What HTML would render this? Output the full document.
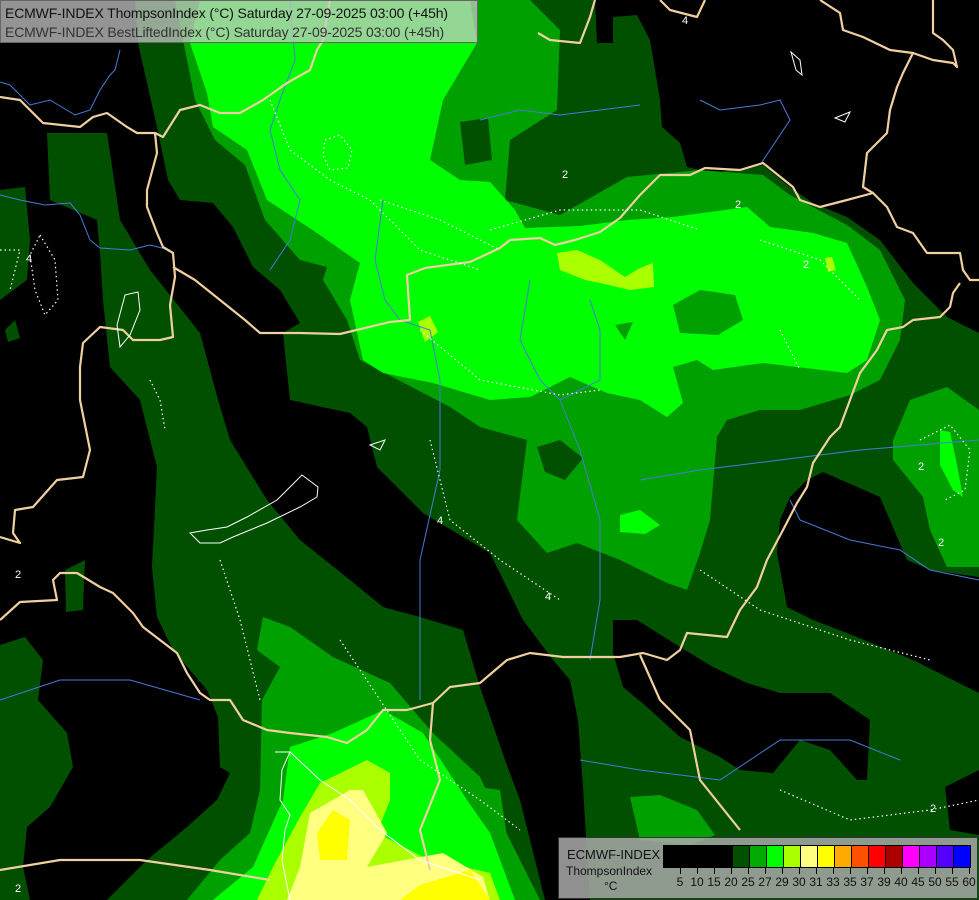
<!DOCTYPE html>
<html><head><meta charset="utf-8"><style>
html,body{margin:0;padding:0;background:#000;}
#w{position:relative;width:979px;height:900px;overflow:hidden;font-family:"Liberation Sans",sans-serif;}
svg{position:absolute;left:0;top:0;}
.hdr{position:absolute;left:0;top:0;width:478px;height:43px;background:rgba(200,200,200,0.74);border:1px solid #666;box-sizing:border-box;}
.hdr div{position:absolute;left:4px;font-size:14px;color:#111;white-space:nowrap;letter-spacing:-0.15px}
.leg{position:absolute;left:558px;top:837px;width:420px;height:62px;background:rgba(168,168,168,0.86);border:1px solid #333;box-sizing:border-box;}
.leg .t{position:absolute;font-size:12px;color:#111;white-space:nowrap}
.bx{position:absolute;top:7px;height:23px;border:1px solid #000;box-sizing:border-box}
.tk{position:absolute;top:29px;width:1px;height:7px;background:#000}
.nm{position:absolute;top:37px;font-size:12px;color:#111;width:24px;text-align:center}
</style></head><body><div id="w">
<svg width="979" height="900" viewBox="0 0 979 900">
<rect width="979" height="900" fill="#005000"/>
<g fill="#000">
<path d="M0,0 L135,0 L138,43 L157,127 L168,180 L180,200 L213,203 L233,227 L253,267 L280,290 L300,323 L283,333 L290,400 L350,413 L367,427 L377,467 L423,513 L490,553 L523,620 L553,660 L570,680 L578,720 L583,787 L590,900 L545,900 L520,800 L505,760 L480,687 L463,630 L420,617 L383,607 L350,580 L300,540 L267,500 L230,440 L218,400 L200,333 L150,270 L120,220 L107,133 L47,133 L50,200 L97,220 L100,253 L103,300 L110,367 L140,400 L157,467 L152,567 L157,617 L173,650 L207,690 L218,717 L220,767 L230,773 L217,800 L187,827 L147,860 L107,900 L30,900 L23,867 L27,827 L50,807 L73,767 L67,733 L38,700 L43,660 L25,637 L0,645 Z"/>
<path d="M595,0 L979,0 L979,333 L947,317 L913,283 L880,240 L847,217 L813,203 L790,187 L763,165 L713,173 L687,167 L680,143 L662,127 L660,100 L650,40 L637,15 L613,17 L613,43 L597,43 Z"/>
<path d="M790,497 L807,480 L823,472 L880,497 L907,560 L930,570 L979,577 L979,693 L953,680 L913,660 L847,633 L813,620 L787,607 L777,553 L780,520 Z"/>
<path d="M613,620 L637,620 L680,647 L713,667 L747,683 L780,693 L830,693 L870,720 L867,780 L857,780 L830,750 L800,740 L773,773 L740,770 L720,757 L680,737 L647,707 L623,687 L613,653 Z"/>
<path d="M945,787 L979,770 L979,835 L950,830Z"/>
</g>
<g fill="#005000">
<path d="M0,190 L25,187 L30,240 L27,280 L0,300Z"/>
<path d="M65,570 L85,560 L83,610 L66,612Z"/>
<path d="M5,330 L15,320 L20,338 L8,342Z"/>
</g>
<g fill="#00a000">
<path d="M175,0 L530,0 L560,30 L557,110 L510,140 L505,200 L560,215 L627,177 L700,170 L763,175 L790,195 L847,225 L880,250 L905,300 L900,340 L880,380 L850,395 L800,410 L760,410 L727,420 L717,437 L710,520 L700,553 L687,590 L667,583 L620,560 L577,543 L547,553 L517,520 L527,440 L480,427 L450,407 L360,360 L347,320 L323,280 L327,267 L300,260 L265,220 L245,165 L215,140 L195,100 Z"/>
<path d="M893,440 L910,400 L947,387 L979,410 L979,567 L947,567 L930,530 L923,497 L893,460Z"/>
<path d="M263,617 L290,627 L333,657 L390,683 L413,710 L433,733 L480,777 L500,820 L540,900 L187,900 L220,860 L250,833 L260,790 L262,700 L280,667 L257,650Z"/>
<path d="M630,797 L660,795 L697,810 L715,835 L690,845 L640,840Z"/>
<path d="M480,787 L500,790 L507,837 L480,840Z"/>
</g>
<g fill="#005000">
<path d="M460,122 L488,118 L492,160 L465,165Z"/>
<path d="M537,447 L560,440 L583,458 L565,480 L545,472Z"/>
</g>
<g fill="#00ff00">
<path d="M200,0 L470,0 L477,43 L443,100 L430,160 L460,180 L490,182 L515,210 L525,228 L580,226 L627,220 L673,217 L747,207 L770,227 L813,233 L847,243 L867,287 L880,320 L867,360 L847,373 L797,367 L763,363 L713,370 L697,360 L673,367 L683,403 L667,417 L640,400 L607,393 L570,377 L530,397 L490,400 L433,383 L383,373 L363,360 L350,300 L360,263 L317,233 L267,200 L247,150 L213,127 L207,93 L190,43 Z"/>
<path d="M377,713 L383,710 L423,733 L467,800 L490,833 L515,900 L213,900 L253,867 L283,800 L290,747 L333,733Z"/>
<path d="M940,430 L950,432 L957,465 L963,497 L953,490 L940,465Z"/>
<path d="M620,515 L640,510 L660,525 L645,534 L620,532Z"/>
</g>
<g fill="#00a000">
<path d="M673,305 L700,290 L735,295 L743,320 L718,335 L680,333Z"/>
<path d="M615,325 L633,322 L625,340Z"/>
</g>
<g fill="#aaff00">
<path d="M557,253 L577,250 L600,260 L625,277 L640,268 L653,263 L654,287 L630,290 L600,283 L585,280 L560,270Z"/>
<path d="M418,322 L430,316 L438,332 L425,342Z"/>
<path d="M825,258 L832,257 L836,270 L828,272Z"/>
<path d="M367,760 L390,773 L390,800 L377,833 L423,857 L490,873 L500,900 L257,900 L273,867 L300,817 L320,783Z"/>
</g>
<g fill="#ffff80">
<path d="M350,790 L363,790 L387,833 L367,867 L443,853 L483,877 L490,900 L287,900 L300,867 L310,813Z"/>
</g>
<g fill="#ffff00">
<path d="M333,810 L350,820 L347,860 L320,860 L317,833Z"/>
<path d="M400,900 L420,885 L470,870 L490,900Z"/>
</g>
<g fill="none" stroke="#4a7ad8" stroke-width="1">
<path d="M0,82 L10,85 L30,105 L50,100 L75,115 L90,110 L100,90 L110,75 L115,70 L120,50"/>
<path d="M0,195 L20,200 L45,205 L70,203 L80,215 L90,240 L100,248 L130,250 L150,245 L170,250"/>
<path d="M290,0 L295,60 L280,100 L270,130 L280,170 L300,200 L290,240 L270,270"/>
<path d="M383,200 L375,260 L385,300 L400,320 L430,330 L440,380 L440,470 L420,560 L420,700"/>
<path d="M530,280 L520,340 L540,380 L560,400 L600,380 L600,330 L590,300"/>
<path d="M560,400 L580,450 L600,520 L600,600 L590,660"/>
<path d="M640,480 L700,470 L780,460 L860,450 L979,440"/>
<path d="M790,500 L800,520 L850,540 L900,550 L930,570 L979,580"/>
<path d="M0,700 L60,680 L130,680 L200,700"/>
<path d="M580,760 L640,770 L720,780 L780,740 L850,740 L900,760"/>
<path d="M700,100 L720,110 L760,105 L780,100 L790,120 L770,150 L760,165"/>
<path d="M480,120 L520,110 L560,115 L600,110 L640,105"/>
</g>
<g fill="none" stroke="#f0d0a0" stroke-width="2.2" stroke-linejoin="round">
<path d="M0,97 L20,100 L43,123 L80,127 L93,117 L107,113 L127,127 L137,133 L155,133 L157,153 L147,190 L147,207 L157,233 L163,247 L173,253 L175,277 L170,305 L173,337 L160,340 L133,340 L123,330 L100,327 L83,343 L80,367 L80,400 L90,450 L83,477 L57,480 L33,507 L15,510 L13,533 L20,543 L0,537"/>
<path d="M155,133 L163,137 L180,110 L200,105 L220,113 L240,113 L263,100 L287,83 L310,70 L317,50 L323,40 L330,0"/>
<path d="M173,267 L195,280 L220,300 L245,320 L260,333 L300,333 L340,334 L390,322 L410,320 L407,275 L425,268 L470,262 L500,248 L510,240 L540,238 L555,245 L575,240 L600,232 L620,218 L640,195 L660,175 L690,175 L705,168 L740,170 L763,163 L793,187 L800,200 L820,207 L847,200 L873,193 L887,207 L897,227 L913,233 L927,253 L960,253 L963,270 L970,280 L979,280"/>
<path d="M960,283 L953,293 L950,307 L940,317 L913,320 L903,327 L887,330 L877,350 L860,373 L850,400 L840,427 L830,437 L813,463 L807,487 L797,503 L783,530 L767,560 L757,587 L740,610 L727,637 L687,633 L680,650 L667,660 L643,653 L620,657 L590,657 L563,657 L530,653 L507,660 L480,683 L450,687 L433,703 L407,710 L383,710 L367,730 L347,743 L327,737 L290,733 L267,730 L243,720 L230,700 L210,700 L200,693 L187,673 L177,653 L160,640 L143,627 L133,613 L113,593 L100,587 L77,573 L60,573 L53,580 L57,600 L20,602 L0,620"/>
<path d="M640,655 L660,700 L690,730 L700,780 L740,830"/>
<path d="M433,703 L430,740 L440,780 L420,830 L430,870"/>
<path d="M0,870 L60,860 L140,860 L210,870 L270,880"/>
<path d="M538,33 L550,40 L580,43 L590,17 L595,0"/>
<path d="M660,0 L670,10 L697,17 L705,0"/>
<path d="M820,0 L840,13 L843,30 L863,37 L890,50 L913,53 L903,73 L897,87 L890,110 L887,133 L867,153 L863,187 L873,193"/>
<path d="M913,53 L933,60 L953,63 L957,67 L953,50 L943,40 L933,33 L933,0"/>
</g>
<g fill="none" stroke="#fff" stroke-width="1">
<path d="M190,533 L200,543 L220,543 L233,537 L267,523 L300,507 L317,497 L318,487 L302,475 L277,500 L247,517 L227,527 L207,530 Z"/>
<path d="M125,295 L138,292 L140,310 L130,335 L120,347 L117,325 Z"/>
<path d="M370,445 L385,440 L380,450Z"/>
<path d="M275,752 L290,752 L282,770 L280,800 L290,815 L285,830 L282,860 L290,900"/>
<path d="M290,752 L320,780 L350,800 L380,830 L420,860 L480,880"/>
<path d="M791,52 L800,60 L802,75 L796,70Z"/>
<path d="M835,118 L850,112 L845,122Z"/>
</g>
<g fill="none" stroke="#fff" stroke-width="1.2" stroke-dasharray="1.5,3">
<path d="M270,100 L290,150 L330,180 L370,200 L390,220 L420,250 L480,270"/>
<path d="M325,140 L340,135 L352,150 L348,168 L330,170 L323,155Z"/>
<path d="M380,200 L440,220 L500,250"/>
<path d="M420,330 L480,380 L560,395 L600,390"/>
<path d="M490,230 L560,210 L640,210 L700,230"/>
<path d="M760,240 L820,260 L860,300"/>
<path d="M40,235 L55,260 L58,300 L45,315 L35,290 L30,255Z"/>
<path d="M0,250 L20,250 L10,290"/>
<path d="M150,380 L160,400 L165,430"/>
<path d="M220,560 L240,620 L260,700"/>
<path d="M340,640 L380,700 L420,760 L480,800 L520,830"/>
<path d="M430,440 L450,520 L500,560 L560,600"/>
<path d="M700,570 L760,610 L850,640 L930,660"/>
<path d="M780,330 L800,370"/>
<path d="M920,440 L950,425 L970,450 L965,490 L945,500"/>
<path d="M780,790 L850,820 L930,810 L979,800"/>
</g>
<g font-family="Liberation Sans, sans-serif" font-size="11" fill="#fff">
<text x="562" y="178">2</text><text x="735" y="208">2</text><text x="803" y="268">2</text>
<text x="437" y="524">4</text><text x="545" y="600">4</text><text x="918" y="470">2</text>
<text x="938" y="546">2</text><text x="15" y="578">2</text><text x="930" y="812">2</text>
<text x="682" y="24">4</text><text x="26" y="262">4</text><text x="15" y="892">2</text>
</g>
</svg>
<div class="hdr"><div style="top:4px">ECMWF-INDEX ThompsonIndex (°C) Saturday 27-09-2025 03:00 (+45h)</div><div style="top:23px;color:#333">ECMWF-INDEX BestLiftedIndex (°C) Saturday 27-09-2025 03:00 (+45h)</div></div>
<div class="leg">
<div class="t" style="left:8px;top:9px;font-size:13px">ECMWF-INDEX</div>
<div class="t" style="left:7px;top:26px">ThompsonIndex</div>
<div class="t" style="left:45px;top:41px">°C</div>
<div class="bx" style="left:104px;width:70px;background:#000"></div>
<div class="bx" style="left:173px;width:18px;background:#005000"></div>
<div class="bx" style="left:190px;width:18px;background:#00aa00"></div>
<div class="bx" style="left:207px;width:18px;background:#00ff00"></div>
<div class="bx" style="left:224px;width:18px;background:#aaff00"></div>
<div class="bx" style="left:241px;width:18px;background:#ffff80"></div>
<div class="bx" style="left:258px;width:18px;background:#ffff00"></div>
<div class="bx" style="left:275px;width:18px;background:#ffaa00"></div>
<div class="bx" style="left:292px;width:18px;background:#ff5000"></div>
<div class="bx" style="left:309px;width:18px;background:#ff0000"></div>
<div class="bx" style="left:326px;width:18px;background:#aa0000"></div>
<div class="bx" style="left:343px;width:18px;background:#ff00ff"></div>
<div class="bx" style="left:360px;width:18px;background:#aa00ff"></div>
<div class="bx" style="left:377px;width:18px;background:#5500ff"></div>
<div class="bx" style="left:394px;width:18px;background:#0000ff"></div>
<div class="tk" style="left:121px"></div><div class="tk" style="left:138px"></div><div class="tk" style="left:155px"></div><div class="tk" style="left:172px"></div><div class="tk" style="left:189px"></div><div class="tk" style="left:206px"></div><div class="tk" style="left:223px"></div><div class="tk" style="left:240px"></div><div class="tk" style="left:257px"></div><div class="tk" style="left:274px"></div><div class="tk" style="left:291px"></div><div class="tk" style="left:308px"></div><div class="tk" style="left:325px"></div><div class="tk" style="left:342px"></div><div class="tk" style="left:359px"></div><div class="tk" style="left:376px"></div><div class="tk" style="left:393px"></div><div class="tk" style="left:410px"></div>
<div class="nm" style="left:109px">5</div><div class="nm" style="left:126px">10</div><div class="nm" style="left:143px">15</div><div class="nm" style="left:160px">20</div><div class="nm" style="left:177px">25</div><div class="nm" style="left:194px">27</div><div class="nm" style="left:211px">29</div><div class="nm" style="left:228px">30</div><div class="nm" style="left:245px">31</div><div class="nm" style="left:262px">33</div><div class="nm" style="left:279px">35</div><div class="nm" style="left:296px">37</div><div class="nm" style="left:313px">39</div><div class="nm" style="left:330px">40</div><div class="nm" style="left:347px">45</div><div class="nm" style="left:364px">50</div><div class="nm" style="left:381px">55</div><div class="nm" style="left:398px">60</div>
</div>
</div>
</body></html>
